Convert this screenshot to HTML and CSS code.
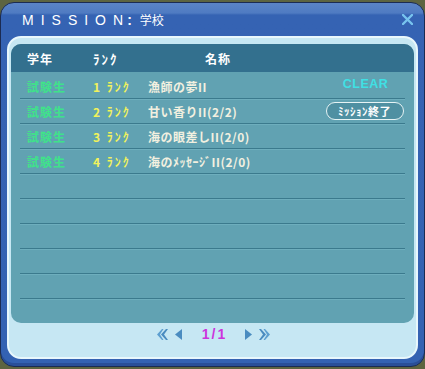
FILE: index.html
```html
<!DOCTYPE html>
<html lang="ja">
<head>
<meta charset="utf-8">
<title>MISSION</title>
<link rel="stylesheet" href="styles.css">
</head>
<body>
<div class="window">
  <div class="titlebar">
    <div class="title">MISSIO<span class="last-letter">N</span><span class="colon">:</span><span class="title-sub">学校</span></div>
    <svg class="close" width="11" height="11" viewBox="0 0 11 11"><path d="M1 1 L10 10 M10 1 L1 10" stroke="#78c4ee" stroke-width="2.4" stroke-linecap="round"/></svg>
  </div>
  <div class="panel">
    <div class="table">
      <div class="thead">
        <span class="c1">学年</span>
        <span class="c2 hrank">ﾗﾝｸ</span>
        <span class="c3 hname">名称</span>
        <span class="c4"></span>
      </div>
      <div class="tbody">
        <div class="row">
          <span class="c1 grade">試験生</span>
          <span class="c2 rank">1 ﾗﾝｸ</span>
          <span class="c3 name">漁師の夢II</span>
          <span class="c4"><span class="clear">CLEAR</span></span>
        </div>
        <div class="row">
          <span class="c1 grade">試験生</span>
          <span class="c2 rank">2 ﾗﾝｸ</span>
          <span class="c3 name">甘い香りII(2/2)</span>
          <span class="c4"><span class="btn">ﾐｯｼｮﾝ終了</span></span>
        </div>
        <div class="row">
          <span class="c1 grade">試験生</span>
          <span class="c2 rank">3 ﾗﾝｸ</span>
          <span class="c3 name">海の眼差しII(2/0)</span>
          <span class="c4"></span>
        </div>
        <div class="row">
          <span class="c1 grade">試験生</span>
          <span class="c2 rank">4 ﾗﾝｸ</span>
          <span class="c3 name">海のﾒｯｾｰｼﾞII(2/0)</span>
          <span class="c4"></span>
        </div>
        <div class="row"></div>
        <div class="row"></div>
        <div class="row"></div>
        <div class="row"></div>
        <div class="row"></div>
        <div class="row last"></div>
      </div>
    </div>
    <div class="pager">
      <svg class="arr" width="11" height="11" viewBox="0 0 11 11"><polygon points="0,5.5 5,0 6.5,0 3,5.5 6.5,11 5,11" fill="#5d9fd0"/><polygon points="4,5.5 9,0 11,0 7,5.5 11,11 9,11" fill="#4a8cc0"/></svg>
      <svg class="arr a2" width="7" height="11" viewBox="0 0 7 11"><polygon points="0,5.5 7,0 7,11" fill="#4a8cc0"/></svg>
      <span class="page">1/1</span>
      <svg class="arr a3" width="7" height="11" viewBox="0 0 7 11"><polygon points="7,5.5 0,0 0,11" fill="#4a8cc0"/></svg>
      <svg class="arr" width="11" height="11" viewBox="0 0 11 11"><polygon points="11,5.5 6,0 4.5,0 8,5.5 4.5,11 6,11" fill="#5d9fd0"/><polygon points="7,5.5 2,0 0,0 4,5.5 0,11 2,11" fill="#4a8cc0"/></svg>
    </div>
  </div>
</div>
</body>
</html>
```

FILE: styles.css
```css
html, body {
  margin: 0;
  padding: 0;
}
body {
  width: 425px;
  height: 369px;
  background: #5d6440;
  overflow: hidden;
  font-family: "Noto Sans CJK JP", "DejaVu Sans", sans-serif;
}
.window {
  box-sizing: border-box;
  margin-top: 2px;
  width: 425px;
  height: 365px;
  border: 1px solid #1b2b52;
  border-radius: 14px;
  background: linear-gradient(180deg, #5b84c6 0px, #4f7bc2 10px, #3563b3 12px, #3462b2 100%);
  display: flex;
  flex-direction: column;
  padding: 0 6px 7px;
  box-shadow: inset 0 -3px 0 #2a4f98;
}
.titlebar {
  height: 33px;
  flex: none;
  display: flex;
  align-items: center;
  justify-content: space-between;
  padding: 0 5px 0 15px;
}
.title {
  font-family: "Liberation Sans", "Noto Sans CJK JP", sans-serif;
  font-size: 14px;
  letter-spacing: 7px;
  color: #ffffff;
  margin-top: -1px;
}
.last-letter {
  letter-spacing: 4px;
}
.colon {
  font-weight: bold;
  letter-spacing: 8px;
}
.title-sub {
  font-family: "Noto Sans CJK JP", sans-serif;
  font-size: 12px;
  letter-spacing: 0;
}
.close {
  display: block;
  margin-top: -1px;
}
.panel {
  flex: 1;
  box-sizing: border-box;
  border: 2px solid #e8f7fc;
  border-radius: 14px;
  background: #c6e7f3;
  padding: 6px 2px 0 2px;
  display: flex;
  flex-direction: column;
}
.table {
  height: 279px;
  flex: none;
  background: #61a2b2;
  border-radius: 10px;
  overflow: hidden;
}
.thead {
  height: 28px;
  background: #33708e;
  display: grid;
  grid-template-columns: 66px 55px 1fr 79px;
  align-items: center;
  padding: 0 9px 0 16px;
  color: #ffffff;
  font-size: 12px;
  font-weight: bold;
  letter-spacing: 1px;
}
.hrank {
  font-size: 13px;
  letter-spacing: 2px;
}
.hname {
  padding-left: 57px;
}
.tbody {
  padding-top: 2px;
}
.row {
  height: 24px;
  margin: 0 9px;
  border-bottom: 1px solid #3b7a8d;
  box-shadow: 0 1px 0 #6eaebd;
  display: grid;
  grid-template-columns: 66px 55px 1fr 79px;
  align-items: center;
  padding-left: 7px;
  font-size: 12px;
  font-weight: bold;
  letter-spacing: 1px;
}
.row.last {
  border-bottom: none;
  box-shadow: none;
}
.grade {
  color: #3fe28a;
}
.rank {
  color: #f2f25a;
  letter-spacing: 2px;
}
.name {
  color: #f2f0e0;
  letter-spacing: 0.5px;
}
.c4 {
  display: flex;
  justify-content: center;
}
.clear {
  font-family: "Liberation Sans", sans-serif;
  font-size: 12.5px;
  font-weight: bold;
  color: #3fe0e4;
  letter-spacing: 0.5px;
  margin-top: -4px;
}
.btn {
  box-sizing: border-box;
  width: 78px;
  height: 18px;
  border: 1px solid #e6f3f4;
  border-radius: 9px;
  background: #4f90a2;
  color: #ffffff;
  font-size: 11px;
  font-weight: bold;
  letter-spacing: 0.5px;
  display: flex;
  align-items: center;
  justify-content: center;
  margin-left: -2px;
}
.pager {
  height: 22px;
  display: flex;
  align-items: center;
  justify-content: center;
  padding-left: 2px;
}
.arr {
  display: block;
}
.a2 {
  margin-left: 7px;
}
.a3 {
  margin-right: 7px;
}
.page {
  font-family: "Liberation Sans", sans-serif;
  font-size: 14px;
  font-weight: bold;
  color: #cc33dc;
  letter-spacing: 2px;
  margin: 0 18px 0 20px;
}
```
